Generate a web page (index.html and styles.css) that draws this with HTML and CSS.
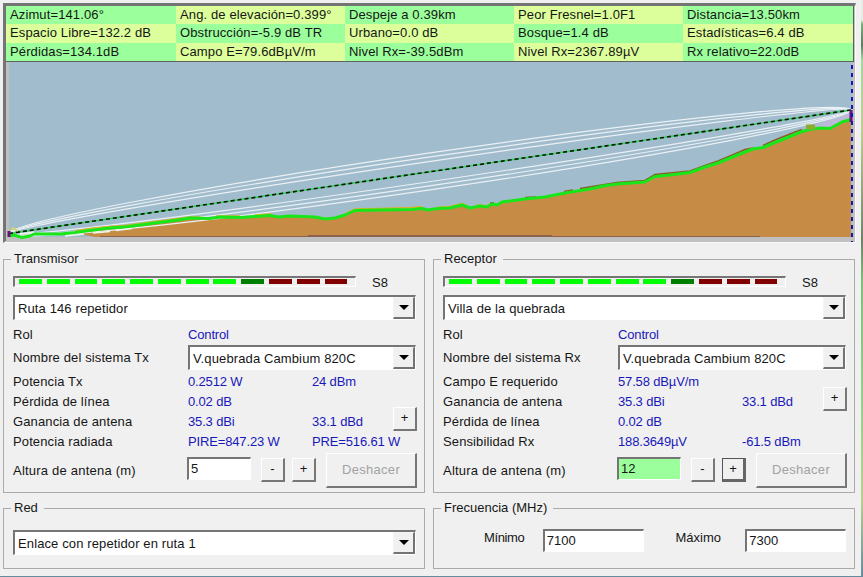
FILE: index.html
```html
<!DOCTYPE html>
<html lang="es">
<head>
<meta charset="utf-8">
<title>Enlace de radio</title>
<link rel="stylesheet" href="styles.css">
</head>
<body>
<div class="desktop">
<main class="window">
  <section class="profile">
    <div class="info">
      <span>Azimut=141.06°</span><span>Ang. de elevación=0.399°</span><span>Despeje a 0.39km</span><span>Peor Fresnel=1.0F1</span><span>Distancia=13.50km</span>
      <span>Espacio Libre=132.2 dB</span><span>Obstrucción=-5.9 dB TR</span><span>Urbano=0.0 dB</span><span>Bosque=1.4 dB</span><span>Estadísticas=6.4 dB</span>
      <span>Pérdidas=134.1dB</span><span>Campo E=79.6dBµV/m</span><span>Nivel Rx=-39.5dBm</span><span>Nivel Rx=2367.89µV</span><span>Rx relativo=22.0dB</span>
    </div>
    <svg class="chart" viewBox="6 62 849 180" width="849" height="180">
      <rect x="6" y="62" width="849" height="180" fill="#c0c0c0"/>
      <rect x="9" y="62" width="843" height="175" fill="#a0bccd"/>
      <path fill="#bcb9d8" d="M800 131L851 112V121L830 129L812 130Z"/>
      <path fill="#c68c46" d="M95 237L75 233L90 231L110 229L125 228L140 226L155 224L175 221L190 219L210 219L220 217L240 218L255 217L270 216L278 217L290 216L315 217L325 219L335 218L345 215L355 211L380 210L412 209L422 208L428 210L438 209L450 208L462 205L470 208L480 206L487 207L492 204L497 205L502 202L525 199L545 197L565 193L590 189L603 186L617 184L645 182L655 176L670 175L690 173L705 167L718 163L730 158L745 152L753 149L763 147L775 142L790 136L802 131L812 129L820 128L830 129L842 122L851 119V237Z"/>
      <path stroke="#8d6150" d="M100 236.5H760M308 235.5H552" fill="none"/>
      <g fill="none" stroke="#eaf0f4" stroke-width="1.2">
        <path d="M9 233.5A425.5 18.6 -8.34 0 1 851 110"/>
        <path d="M9 233.5A425.5 14.6 -8.34 0 1 851 110"/>
        <path d="M9 233.5A425.5 10.2 -8.34 0 1 851 110"/>
        <path d="M9 233.5A425.5 18 -8.34 0 0 851 110"/>
        <path d="M9 233.5A425.5 14 -8.34 0 0 851 110"/>
        <path d="M9 233.5A425.5 9.8 -8.34 0 0 851 110"/>
      </g>
      <path fill="none" stroke="#d5b425" stroke-width="1.4" d="M75 231L90 228.500L110 226.500L125 225.500L140 223.500L155 221.500L175 219L190 217L200 217M216 216L240 216M255 215L272 214M345 214L355 209L380 208.500L412 207.500L422 206.500M436 207.500L450 206.500L462 203.500L466 205M476 205L487 205.500"/>
      <path fill="none" stroke="#8b5a1e" stroke-width="1.5" d="M490 203L494 203M525 197.500L536 197M564 191.500L573 190M580 188.500L617 182.500L645 180.500L655 174.500L690 171L705 165.500L718 161L730 156L745 149.500L753 148M763 145.500L775 140L790 134L802 129.500"/>
      <path fill="none" stroke="#19e619" stroke-width="3" stroke-linejoin="round" d="M9 236L14 235L22 237.500L30 236L34 234L60 234L75 232.500L90 230.500L110 228L125 227L140 225L155 223L175 220.500L190 218L210 218.500L220 217L240 217.500L255 216.500L270 215.500L278 217L290 216L315 217L325 219L335 218L345 215L355 210.500L380 210L412 209.500L422 208.500L428 210L438 208.500L450 208L462 205L470 208L480 206L487 207L492 204L497 205L502 202L525 199L545 197L565 193L590 189L603 186L617 184L645 182L655 176.500L670 175L690 172.500L705 167L718 163L730 158L745 152L753 149L763 147.500L775 142.500L790 136.500L802 131.500L812 129L820 128L830 128.500L842 122L851 119.500"/>
      <path fill="none" stroke="#eef4e8" stroke-width="1.3" d="M20 234L34 232M65 236L84 234M93 233L110 231.500M116 230.500L132 228.500"/>
      <path fill="none" stroke="#90aa30" stroke-width="5" d="M806 127H815"/>
      <path fill="none" stroke="#30d54c" stroke-width="1.5" d="M9 233.500L851 110"/>
      <path fill="none" stroke="#09150e" stroke-width="1.6" stroke-dasharray="4 3" d="M9 233.500L851 110"/>
      <path fill="none" stroke="#d9d36c" stroke-width="1.5" d="M9 232L13 228L18 231"/>
      <path fill="none" stroke="#68157b" stroke-width="3" d="M9 231V237M851 110V122"/>
      <path fill="none" stroke="#1717b8" stroke-width="2" stroke-dasharray="4 4" d="M852 65V242"/>
    </svg>
  </section>

  <div class="panels">
    <fieldset class="station">
      <legend>Transmisor</legend>
      <div class="signal"><div class="meter"><i></i><i></i><i></i><i></i><i></i><i></i><i></i><i></i><i class="mid"></i><i class="off"></i><i class="off"></i><i class="off"></i></div><span>S8</span></div>
      <div class="select"><span>Ruta 146 repetidor</span><b class="arrow"></b></div>
      <div class="row role"><span>Rol</span><span class="value">Control</span></div>
      <div class="row system"><span>Nombre del sistema Tx</span><div class="select"><span>V.quebrada Cambium 820C</span><b class="arrow"></b></div></div>
      <div class="row"><span>Potencia Tx</span><span class="value">0.2512 W</span><span class="value">24 dBm</span></div>
      <div class="row"><span>Pérdida de línea</span><span class="value">0.02 dB</span></div>
      <div class="row"><span>Ganancia de antena</span><span class="value">35.3 dBi</span><span class="value">33.1 dBd</span><div class="button step raised">+</div></div>
      <div class="row"><span>Potencia radiada</span><span class="value">PIRE=847.23 W</span><span class="value">PRE=516.61 W</span></div>
      <div class="height"><span class="name">Altura de antena (m)</span><div class="field">5</div><div class="button step">-</div><div class="button step plus">+</div><div class="button undo">Deshacer</div></div>
    </fieldset>

    <fieldset class="station">
      <legend>Receptor</legend>
      <div class="signal"><div class="meter"><i></i><i></i><i></i><i></i><i></i><i></i><i></i><i></i><i class="mid"></i><i class="off"></i><i class="off"></i><i class="off"></i></div><span>S8</span></div>
      <div class="select"><span>Villa de la quebrada</span><b class="arrow"></b></div>
      <div class="row role"><span>Rol</span><span class="value">Control</span></div>
      <div class="row system"><span>Nombre del sistema Rx</span><div class="select"><span>V.quebrada Cambium 820C</span><b class="arrow"></b></div></div>
      <div class="row"><span>Campo E requerido</span><span class="value">57.58 dBµV/m</span></div>
      <div class="row"><span>Ganancia de antena</span><span class="value">35.3 dBi</span><span class="value">33.1 dBd</span><div class="button step raised">+</div></div>
      <div class="row"><span>Pérdida de línea</span><span class="value">0.02 dB</span></div>
      <div class="row"><span>Sensibilidad Rx</span><span class="value">188.3649µV</span><span class="value">-61.5 dBm</span></div>
      <div class="height"><span class="name">Altura de antena (m)</span><div class="field changed">12</div><div class="button step">-</div><div class="button step plus focused">+</div><div class="button undo">Deshacer</div></div>
    </fieldset>

    <fieldset class="network">
      <legend>Red</legend>
      <div class="select"><span>Enlace con repetidor en ruta 1</span><b class="arrow"></b></div>
    </fieldset>

    <fieldset class="network">
      <legend>Frecuencia (MHz)</legend>
      <div class="frequency"><span>Mínimo</span><div class="field">7100</div><span class="max">Máximo</span><div class="field">7300</div></div>
    </fieldset>
  </div>
</main>
</div>
</body>
</html>
```

FILE: styles.css
```css
* { box-sizing: border-box; }

body {
  margin: 0;
  overflow: hidden;
  font: 13px/16px "Liberation Sans", Arial, sans-serif;
  letter-spacing: 0.12px;
  color: #161616;
}

.desktop {
  width: 863px;
  height: 577px;
  padding: 0 2px 1px 0;
  background: linear-gradient(#e8ece5 0 20px, #76b27b 24px, #5e7960 45px, #a4d6a0 60px, #c2cc92 130px, #71806c 240px, #7ebd78 280px, #95cf8c 400px, #b9cf90 500px, #648b9c);
}

.window {
  height: 576px;
  padding: 3px 0 0 3px;
  background: #f0f0f0;
}

.profile {
  width: 853px;
  height: 240px;
  border: 3px solid #747474;
  border-width: 3px 0 0 3px;
  border-right: 1px solid #fafafa;
  border-bottom: 2px solid #fafafa;
  background: #c0c0c0;
}

.info {
  display: grid;
  grid-template-columns: 170px 169px 169px 169px 170px;
  grid-template-rows: 18px 19px 18px;
  width: 848px;
  height: 56px;
  border-right: 1px solid #606060;
  border-bottom: 1px solid #606060;
  line-height: 18px;
}

.info span {
  padding-left: 4px;
  background: #9bff9b;
  white-space: nowrap;
}

.info span:nth-child(even) { background: #dcff9b; }

.chart { display: block; }

.panels {
  display: grid;
  grid-template-columns: 422px 422px;
  grid-template-rows: 242px 69px;
  gap: 7px 8px;
  padding-top: 8px;
}

fieldset {
  min-width: 0;
  margin: 0;
  padding: 0 8px 0 9px;
  border: 1px solid #aaa;
}

legend {
  height: 16px;
  margin-left: -2px;
  padding: 0 6px 0 3px;
  letter-spacing: 0;
}

.signal {
  display: flex;
  gap: 16px;
  height: 28px;
  padding-top: 9px;
}

.signal span { margin-top: -1px; letter-spacing: 0; }

.meter {
  display: flex;
  align-items: center;
  gap: 4.9px;
  width: 343px;
  height: 11px;
  padding: 0 0 1px 4px;
  border: 1px solid #fff;
  border-top: 2px solid #757575;
  border-left: 2px solid #757575;
}

.meter i {
  width: 22.9px;
  height: 5px;
  background: #0f0;
}

.meter .mid { background: #008000; }
.meter .off { background: #800000; }

.select {
  display: flex;
  justify-content: space-between;
  width: 403px;
  height: 25px;
  border: 1px solid #fff;
  border-top: 2px solid #757575;
  border-left: 2px solid #757575;
  background: #fff;
  line-height: 23px;
}

.select span { padding-left: 3px; }

.arrow {
  display: flex;
  align-items: center;
  justify-content: center;
  width: 22px;
  height: 22px;
  border: 1px solid #f4f4f4;
  border-right: 2px solid #737373;
  border-bottom: 2px solid #737373;
  background: #f0f0f0;
}

.arrow::before {
  content: "";
  border: 5px solid transparent;
  border-top-color: #000;
  border-bottom: 0;
}

.row {
  display: grid;
  grid-template-columns: 175px 124px 81px 23px;
  align-items: center;
  height: 20px;
  white-space: nowrap;
}

.row > span { padding-top: 1px; }
.role { height: 25px; padding-top: 3px; }
.system { height: 26px; padding-bottom: 1px; }
.system .select { width: 228px; }
.value { color: #1818ba; letter-spacing: -0.15px; }

.button {
  display: flex;
  align-items: center;
  justify-content: center;
  border: 1px solid #fff;
  border-right: 2px solid #777;
  border-bottom: 2px solid #777;
  background: #f0f0f0;
}

.step { width: 24px; height: 24px; padding-bottom: 1px; }
.row .raised { margin: -4px 0 0; }

.height {
  display: flex;
  align-items: center;
  height: 38px;
}

.height > * { flex: none; }
.name { width: 174px; padding-top: 2px; letter-spacing: 0.22px; }

.field {
  width: 64px;
  height: 23px;
  margin: -3px 10px 0 0;
  padding-left: 2px;
  border: 1px solid #fff;
  border-top: 2px solid #757575;
  border-left: 2px solid #757575;
  background: #fff;
  line-height: 20px;
  letter-spacing: 0;
}

.changed { background: #9bff9b; }
.plus { margin: 0 10px 0 7px; }

.focused {
  border: 1px solid #555;
  border-right: 3px solid #666;
  border-bottom: 3px solid #666;
}

.undo {
  width: 91px;
  height: 35px;
  color: #a2a2a2;
  letter-spacing: 0.3px;
}

.network .select { margin-top: 14px; }

.frequency {
  display: flex;
  align-items: flex-start;
  padding: 13px 0 0 41px;
}

.frequency > span { width: 59px; padding-top: 1px; letter-spacing: -0.4px; }
.frequency .field { width: 101px; height: 23px; margin: 0 32px 0 0; }
.frequency .max { width: 70px; letter-spacing: 0; }
.frequency .field:last-child { margin: 0; }
```
